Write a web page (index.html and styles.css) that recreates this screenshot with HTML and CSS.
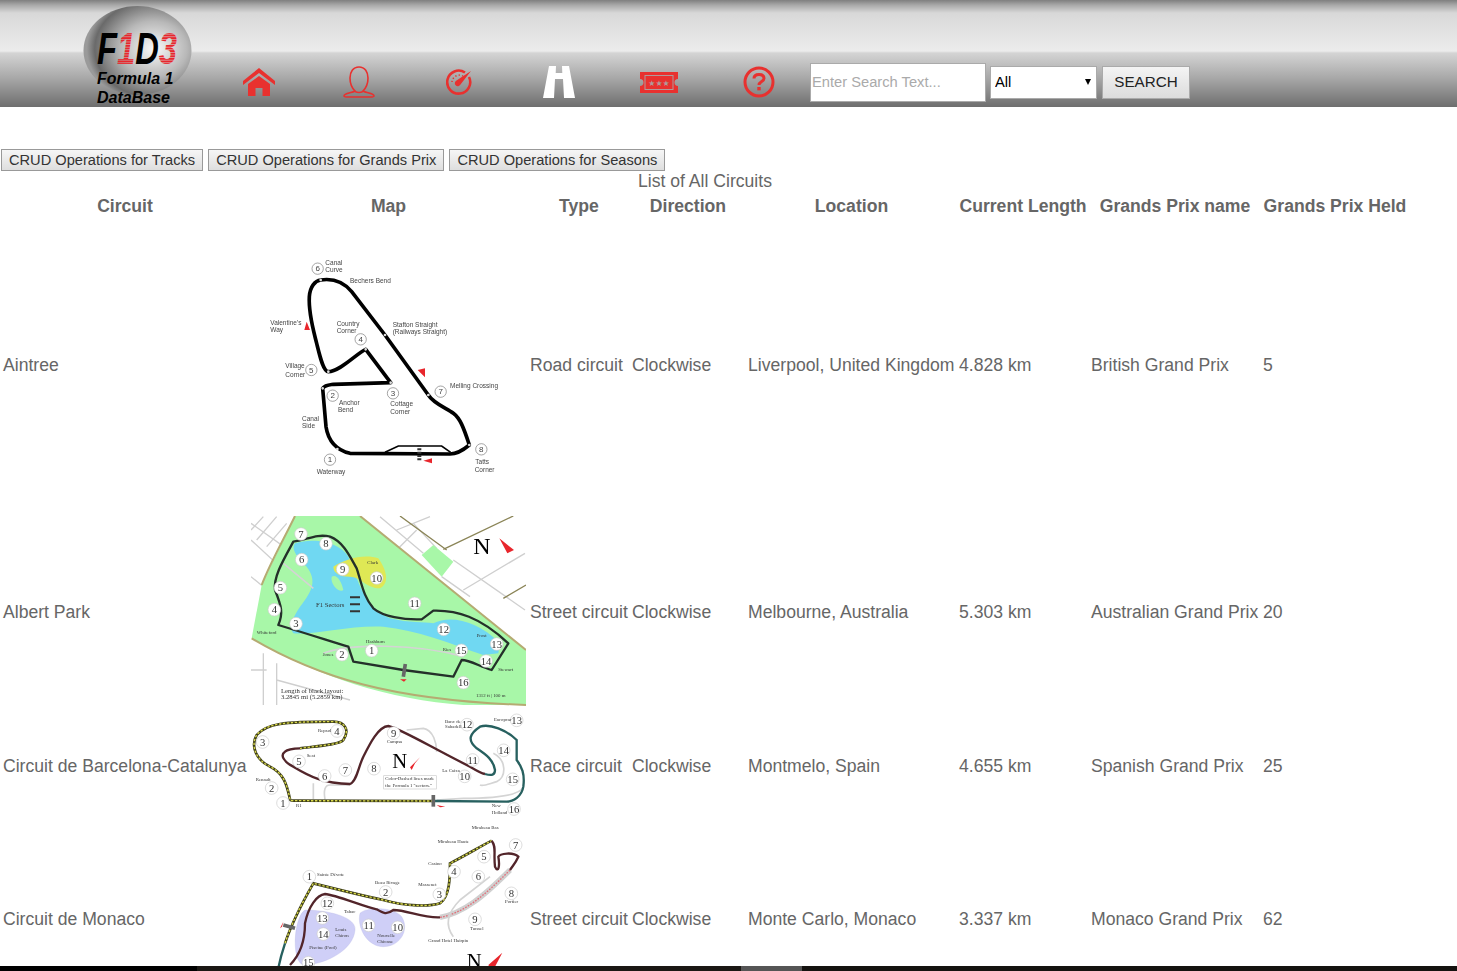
FILE: index.html
```html
<!DOCTYPE html>
<html lang="en">
<head>
    <meta charset="UTF-8">
    <meta name="viewport" content="width=device-width, initial-scale=1.0">
    <title>Formula 1 DataBase</title>
    <link rel="stylesheet" href="styles.css">
</head>
<body>
<div class="page">
    <header class="topbar">
        <svg class="logo" viewBox="0 0 109 101" width="109" height="101">
            <defs>
                <radialGradient id="disc" cx="65%" cy="48%" r="62%">
                    <stop offset="0" stop-color="#fafafa"/>
                    <stop offset="0.5" stop-color="#b8b8b8"/>
                    <stop offset="0.88" stop-color="#6a6a6a"/>
                    <stop offset="1" stop-color="#9a9a9a"/>
                </radialGradient>
                <pattern id="stripes" width="3" height="2.600" patternUnits="userSpaceOnUse">
                    <rect width="3" height="2" fill="#e8262c"/>
                </pattern>
            </defs>
            <ellipse cx="54.500" cy="44.500" rx="54" ry="44.500" fill="url(#disc)"/>
            <text class="logo-mark" x="14" y="58" textLength="80" lengthAdjust="spacingAndGlyphs"><tspan fill="#000">F</tspan><tspan fill="url(#stripes)">1</tspan><tspan fill="#000">D</tspan><tspan fill="url(#stripes)">3</tspan></text>
            <text class="logo-name" x="14" y="78">Formula 1</text>
            <text class="logo-name" x="14" y="97">DataBase</text>
        </svg>

        <nav class="nav">
            <a class="nav-item" href="#">
                <svg viewBox="0 0 32 28" width="32" height="28">
                    <path fill="#e8312f" d="M16 0 L32 13 V17 L16 5 L0 17 V13 Z M5 16 L16 8 L27 16 V28 H19.500 V20 H12.500 V28 H5 Z"/>
                </svg>
            </a>
            <a class="nav-item" href="#">
                <svg viewBox="0 0 32 32" width="32" height="32">
                    <g fill="none" stroke="#e8312f" stroke-width="1.600">
                        <path d="M16 1 C10 1 7 6 7 12 C7 18 10 23 12 25 C9 27 1 27 1 30 C1 31 3 31 5 31 H27 C29 31 31 31 31 30 C31 27 23 27 20 25 C22 23 25 18 25 12 C25 6 22 1 16 1 Z"/>
                        <path d="M12 25.500 Q16 27.500 20 25.500"/>
                    </g>
                </svg>
            </a>
            <a class="nav-item" href="#">
                <svg viewBox="0 0 26 26" width="26" height="26">
                    <g fill="none" stroke="#e8312f">
                        <path stroke-width="2.600" d="M19 3.500 A11.500 11.500 0 1 0 23 8"/>
                        <path stroke-width="1.500" stroke-dasharray="1.200 2.200" d="M6 13 A7.500 7.500 0 0 1 17 7"/>
                    </g>
                    <path fill="#e8312f" d="M25 2 L14.500 15.500 A3 3 0 1 1 10.500 11.500 Z"/>
                </svg>
            </a>
            <a class="nav-item" href="#">
                <svg viewBox="0 0 32 32" width="32" height="32">
                    <path fill="#fff" d="M6 0 H13 L12.700 7 H19.300 L19 0 H26 L32 32 H21 L20 13 H12 L11 32 H0 Z"/>
                </svg>
            </a>
            <a class="nav-item" href="#">
                <svg viewBox="0 0 38 21" width="38" height="21">
                    <path fill="#e8312f" d="M0 0 H38 V7 A3 3 0 0 0 38 14 V21 H0 V14 A3 3 0 0 0 0 7 Z"/>
                    <rect x="5" y="3.500" width="28" height="14" fill="none" stroke="#b09a9a" stroke-width="1"/>
                    <text class="ticket-stars" x="19" y="14" text-anchor="middle">★★★</text>
                </svg>
            </a>
            <a class="nav-item" href="#">
                <svg viewBox="0 0 32 32" width="32" height="32">
                    <circle cx="16" cy="16" r="14" fill="none" stroke="#e8312f" stroke-width="3"/>
                    <path fill="none" stroke="#e8312f" stroke-width="3" d="M11 12.500 C11 9.500 13.500 8.500 16 8.500 C19 8.500 21 10 21 12.500 C21 15.500 16 15.500 16 19"/>
                    <rect x="14.300" y="21" width="3.400" height="3.400" fill="#e8312f"/>
                </svg>
            </a>
        </nav>

        <form class="search">
            <input class="search-text" type="text" placeholder="Enter Search Text...">
            <div class="select-wrap">
                <select class="search-type">
                    <option>All</option>
                    <option>Tracks</option>
                    <option>Grands Prix</option>
                    <option>Seasons</option>
                </select>
            </div>
            <button class="search-btn" type="submit">SEARCH</button>
        </form>
    </header>

    <main class="content">
        <div class="crud">
            <button class="crud-btn">CRUD Operations for Tracks</button>
            <button class="crud-btn">CRUD Operations for Grands Prix</button>
            <button class="crud-btn">CRUD Operations for Seasons</button>
        </div>

        <table class="circuits">
            <caption>List of All Circuits</caption>
            <colgroup>
                <col class="col-circuit">
                <col class="col-map">
                <col class="col-type">
                <col class="col-direction">
                <col class="col-location">
                <col class="col-length">
                <col class="col-gp">
                <col class="col-held">
            </colgroup>
            <thead>
                <tr>
                    <th>Circuit</th>
                    <th>Map</th>
                    <th>Type</th>
                    <th>Direction</th>
                    <th>Location</th>
                    <th>Current Length</th>
                    <th>Grands Prix name</th>
                    <th>Grands Prix Held</th>
                </tr>
            </thead>
            <tbody>
                <tr>
                    <td>Aintree</td>
                    <td>
                        <svg class="map" viewBox="3 -96 825 882" width="275" height="294">
                            <path class="track-black" d="M212 90 C245 85 280 95 305 125 L405 255 L535 435 C550 460 590 475 610 490 C630 505 640 530 658 585 C640 600 620 612 600 612 L300 610 C260 600 235 575 228 530 L218 415 C225 405 235 405 250 403 L422 398 L347 298 C320 310 270 365 235 365 C220 365 210 320 200 280 C190 240 175 190 178 140 C180 110 195 92 212 90 Z"/>
                            <path class="track-thin" d="M405 607 L445 588 H575 L602 607"/>
                            <path class="ticks" d="M212 90 h.1 M405 255 h.1 M535 435 h.1 M658 585 h.1 M262 597 h.1 M218 415 h.1 M422 398 h.1 M347 298 h.1 M235 365 h.1"/>
                            <path class="flag" d="M163 240 L170 215 L180 240 Z M503 360 L525 355 L525 382 Z M520 632 L546 625 V640 Z"/>
                            <path class="checker" d="M508 585 V632"/>
                            <g class="turn">
                                <circle cx="203" cy="56" r="17"/><text x="203" y="62">6</text>
                                <circle cx="332" cy="268" r="17"/><text x="332" y="274">4</text>
                                <circle cx="184" cy="360" r="17"/><text x="184" y="366">5</text>
                                <circle cx="248" cy="437" r="17"/><text x="248" y="443">2</text>
                                <circle cx="429" cy="430" r="17"/><text x="429" y="436">3</text>
                                <circle cx="572" cy="425" r="17"/><text x="572" y="431">7</text>
                                <circle cx="694" cy="598" r="17"/><text x="694" y="604">8</text>
                                <circle cx="240" cy="629" r="17"/><text x="240" y="635">1</text>
                            </g>
                            <g class="label">
                                <text x="226" y="44">Canal</text>
                                <text x="226" y="66">Curve</text>
                                <text x="300" y="98">Bechers Bend</text>
                                <text x="61" y="224">Valentine's</text>
                                <text x="61" y="246">Way</text>
                                <text x="260" y="227">Country</text>
                                <text x="260" y="250">Corner</text>
                                <text x="428" y="231">Stafton Straight</text>
                                <text x="428" y="253">(Railways Straight)</text>
                                <text x="106" y="354">Village</text>
                                <text x="106" y="381">Corner</text>
                                <text x="600" y="414">Melling Crossing</text>
                                <text x="267" y="465">Anchor</text>
                                <text x="264" y="487">Bend</text>
                                <text x="421" y="469">Cottage</text>
                                <text x="421" y="491">Corner</text>
                                <text x="156" y="513">Canal</text>
                                <text x="156" y="535">Side</text>
                                <text x="200" y="671">Waterway</text>
                                <text x="676" y="641">Tatts</text>
                                <text x="674" y="667">Corner</text>
                            </g>
                        </svg>
                    </td>
                    <td>Road circuit</td>
                    <td>Clockwise</td>
                    <td>Liverpool, United Kingdom</td>
                    <td>4.828 km</td>
                    <td>British Grand Prix</td>
                    <td>5</td>
                </tr>
                <tr>
                    <td>Albert Park</td>
                    <td>
                        <svg class="map" viewBox="3 18 825 576" width="275" height="192">
                            <path class="road" d="M3 40 L130 130 M3 90 L90 170 M40 20 L3 60 M80 20 L20 90 M110 40 L50 110 M3 200 L40 230 M390 20 L520 130 M440 60 L540 20 M490 40 L560 115 M500 60 L440 120 M610 150 L825 300 M575 200 L660 260 M640 240 L825 130 M40 430 V585 M80 460 V585 M3 480 H50 M80 510 L300 570"/>
                            <path class="park" d="M135 18 L330 18 L828 420 V585 H640 C420 570 200 500 5 385 L35 225 Z"/>
                            <path class="park" d="M515 135 L550 105 L610 155 L575 200 Z"/>
                            <path class="edge" d="M330 18 L828 420 M5 385 C200 500 420 570 828 585 M135 18 C100 90 60 160 35 225"/>
                            <path class="main-road" d="M450 18 L590 120 M580 118 L790 18 M760 265 L828 225"/>
                            <path class="lake" d="M135 100 C200 80 280 100 300 150 C320 200 340 290 420 325 C480 340 520 335 550 340 C600 315 680 330 750 400 L745 430 L700 435 C600 400 500 360 400 350 C300 345 200 375 130 370 C115 350 130 320 150 290 C190 240 200 210 170 170 C150 150 120 120 135 100 Z"/>
                            <path class="isle" d="M245 200 C260 190 275 215 280 240 C270 250 240 225 245 200 Z"/>
                            <path class="club" d="M250 170 C280 150 340 130 385 145 C410 180 420 220 390 235 C350 235 330 200 300 200 C270 200 250 190 250 170 Z"/>
                            <path class="pale-road" d="M220 430 C300 400 500 400 640 440 M100 160 L190 235"/>
                            <path class="track-dark" d="M130 95 C170 90 200 70 240 80 C280 95 300 140 320 175 C335 220 340 260 370 295 C400 320 460 330 515 328 L550 302 C620 300 690 320 775 400 L725 480 C690 470 660 450 635 450 L610 500 L460 480 L310 455 L295 410 C260 400 200 380 85 345 C100 310 95 290 75 240 C70 200 100 150 130 95 Z"/>
                            <path class="sf" d="M466 462 L460 500"/>
                            <path class="flag" d="M450 508 H470 L462 515 Z M748 85 L792 120 L772 130 Z"/>
                            <g class="legend"><path d="M300 262 H330 M300 283 H330 M300 304 H330"/></g>
                            <g class="turn big">
                                <circle cx="153" cy="72" r="17"/><text x="153" y="81">7</text>
                                <circle cx="228" cy="101" r="17"/><text x="228" y="110">8</text>
                                <circle cx="155" cy="149" r="17"/><text x="155" y="158">6</text>
                                <circle cx="278" cy="178" r="17"/><text x="278" y="187">9</text>
                                <circle cx="380" cy="204" r="17"/><text x="380" y="213">10</text>
                                <circle cx="91" cy="233" r="17"/><text x="91" y="242">5</text>
                                <circle cx="73" cy="299" r="17"/><text x="73" y="308">4</text>
                                <circle cx="138" cy="341" r="17"/><text x="138" y="350">3</text>
                                <circle cx="494" cy="280" r="17"/><text x="494" y="289">11</text>
                                <circle cx="581" cy="358" r="17"/><text x="581" y="367">12</text>
                                <circle cx="740" cy="402" r="17"/><text x="740" y="411">13</text>
                                <circle cx="708" cy="453" r="17"/><text x="708" y="462">14</text>
                                <circle cx="634" cy="421" r="17"/><text x="634" y="430">15</text>
                                <circle cx="640" cy="518" r="17"/><text x="640" y="527">16</text>
                                <circle cx="365" cy="422" r="17"/><text x="365" y="431">1</text>
                                <circle cx="276" cy="434" r="17"/><text x="276" y="443">2</text>
                            </g>
                            <text class="north north-large" x="670" y="132">N</text>
                            <g class="label serif">
                                <text x="352" y="163">Clark</text>
                                <text class="wide" x="198" y="292">F1 Sectors</text>
                                <text x="20" y="372">Whiteford</text>
                                <text x="218" y="438">Jones</text>
                                <text x="348" y="398">Hashburn</text>
                                <text x="578" y="423">Ries</text>
                                <text x="680" y="380">Prost</text>
                                <text x="745" y="482">Stewart</text>
                                <text class="wide" x="93" y="548">Length of black layout:</text>
                                <text class="wide" x="93" y="568">3.2845 mi (5.2859 km)</text>
                                <text x="678" y="560">1312 ft | 100 m</text>
                            </g>
                        </svg>
                    </td>
                    <td>Street circuit</td>
                    <td>Clockwise</td>
                    <td>Melbourne, Australia</td>
                    <td>5.303 km</td>
                    <td>Australian Grand Prix</td>
                    <td>20</td>
                </tr>
                <tr>
                    <td>Circuit de Barcelona-Catalunya</td>
                    <td>
                        <svg class="map" viewBox="3 6 825 324" width="275" height="108">
                            <path class="pale-road" d="M190 220 V268 M225 268 C220 240 225 225 240 225 H300 M470 60 L520 55 C550 60 560 100 560 125 M730 130 C770 150 770 200 740 215 C720 220 700 230 690 225 M820 230 C810 260 720 265 640 265 L560 270"/>
                            <path class="track-olive" d="M120 268 C110 220 100 190 60 170 C20 150 0 110 20 75 C50 40 100 35 250 35 C285 35 300 60 280 90 C270 105 180 110 150 115"/>
                            <path class="track-dash" d="M120 268 C110 220 100 190 60 170 C20 150 0 110 20 75 C50 40 100 35 250 35 C285 35 300 60 280 90 C270 105 180 110 150 115"/>
                            <path class="track-red" d="M150 115 C130 115 110 120 105 125 C90 135 100 155 130 170 C180 200 220 220 300 222 C320 215 325 170 340 140 C360 100 385 50 415 48 C450 55 540 110 660 170 C680 182 695 190 705 192"/>
                            <path class="track-teal" d="M705 192 C725 198 735 195 735 180 C730 150 710 135 680 115 C650 90 660 70 690 50 C720 40 770 60 800 90 L800 150 C815 170 825 190 820 230 C815 260 790 275 770 275 L550 273"/>
                            <path class="track-olive" d="M550 273 L130 272 C122 272 120 270 120 268"/>
                            <path class="track-dash" d="M550 273 L130 272 C122 272 120 270 120 268"/>
                            <path class="sf" d="M550 255 V290"/>
                            <path class="flag" d="M480 172 L510 142 L495 160 L485 180 Z M560 285 L586 290 L570 292 Z"/>
                            <rect class="note" x="401" y="197" width="158" height="40"/>
                            <g class="turn big">
                                <circle cx="38" cy="96" r="17"/><text x="38" y="105">3</text>
                                <circle cx="261" cy="63" r="17"/><text x="261" y="72">4</text>
                                <circle cx="147" cy="154" r="17"/><text x="147" y="163">5</text>
                                <circle cx="224" cy="198" r="17"/><text x="224" y="207">6</text>
                                <circle cx="286" cy="180" r="17"/><text x="286" y="189">7</text>
                                <circle cx="372" cy="176" r="17"/><text x="372" y="185">8</text>
                                <circle cx="431" cy="69" r="17"/><text x="431" y="78">9</text>
                                <circle cx="644" cy="199" r="17"/><text x="644" y="208">10</text>
                                <circle cx="668" cy="150" r="17"/><text x="668" y="159">11</text>
                                <circle cx="651" cy="44" r="17"/><text x="651" y="53">12</text>
                                <circle cx="800" cy="31" r="17"/><text x="800" y="40">13</text>
                                <circle cx="761" cy="121" r="17"/><text x="761" y="130">14</text>
                                <circle cx="788" cy="208" r="17"/><text x="788" y="217">15</text>
                                <circle cx="792" cy="297" r="17"/><text x="792" y="306">16</text>
                                <circle cx="99" cy="279" r="17"/><text x="99" y="288">1</text>
                                <circle cx="65" cy="234" r="17"/><text x="65" y="243">2</text>
                            </g>
                            <text class="north" x="427" y="174">N</text>
                            <g class="label serif">
                                <text x="204" y="66">Repsol</text>
                                <text x="170" y="142">Seat</text>
                                <text x="17" y="212">Renault</text>
                                <text x="410" y="98">Campsa</text>
                                <text x="406" y="210">Color-Dashed lines mark</text>
                                <text x="406" y="230">the Formula 1 "sectors."</text>
                                <text x="585" y="40">Banc de</text>
                                <text x="585" y="55">Sabadell</text>
                                <text x="577" y="186">La Caixa</text>
                                <text x="732" y="34">Europcar</text>
                                <text x="725" y="292">New</text>
                                <text x="725" y="312">Holland</text>
                                <text x="138" y="290">R1</text>
                            </g>
                        </svg>
                    </td>
                    <td>Race circuit</td>
                    <td>Clockwise</td>
                    <td>Montmelo, Spain</td>
                    <td>4.655 km</td>
                    <td>Spanish Grand Prix</td>
                    <td>25</td>
                </tr>
                <tr>
                    <td>Circuit de Monaco</td>
                    <td>
                        <svg class="map" viewBox="3 342 825 570" width="275" height="190">
                            <path class="blob" d="M165 600 C230 600 320 620 315 660 C310 720 230 760 170 765 C120 775 130 620 165 600 Z M330 610 C350 590 430 590 455 620 C480 660 450 710 400 710 C350 710 320 650 330 610 Z"/>
                            <path class="tunnel" d="M780 480 C700 560 640 610 570 622"/>
                            <path class="tunnel-core" d="M780 480 C700 560 640 610 570 622"/>
                            <path class="pale-road" d="M610 680 C580 640 600 600 630 570 L720 500"/>
                            <path class="track-olive" d="M105 700 C125 640 150 590 190 520 C250 535 330 555 400 570 C470 590 540 590 570 580 C600 560 600 500 600 460 C640 440 690 410 725 392"/>
                            <path class="track-dash" d="M105 700 C125 640 150 590 190 520 C250 535 330 555 400 570 C470 590 540 590 570 580 C600 560 600 500 600 460 C640 440 690 410 725 392"/>
                            <path class="track-red" d="M725 392 C740 410 730 430 735 470 C745 490 750 470 745 440 C750 430 790 425 805 440 C795 462 790 465 780 480"/>
                            <path class="track-red" d="M570 622 C520 625 470 600 430 600 C410 615 400 610 380 598 C340 590 260 555 225 552 C200 555 175 590 165 640 C165 680 155 730 120 765"/>
                            <path class="track-teal" d="M105 700 C95 730 85 770 80 800"/>
                            <path class="sf" d="M100 645 L135 655"/>
                            <path class="flag" d="M90 655 L100 635 L96 650 Z M715 765 L757 728 L735 770 L728 790 Z"/>
                            <g class="turn big">
                                <circle cx="178" cy="500" r="15"/><text x="178" y="509">1</text>
                                <circle cx="407" cy="546" r="17"/><text x="407" y="555">2</text>
                                <circle cx="568" cy="553" r="17"/><text x="568" y="562">3</text>
                                <circle cx="612" cy="485" r="17"/><text x="612" y="494">4</text>
                                <circle cx="702" cy="440" r="17"/><text x="702" y="449">5</text>
                                <circle cx="685" cy="500" r="17"/><text x="685" y="509">6</text>
                                <circle cx="797" cy="405" r="17"/><text x="797" y="414">7</text>
                                <circle cx="784" cy="550" r="17"/><text x="784" y="559">8</text>
                                <circle cx="675" cy="628" r="17"/><text x="675" y="637">9</text>
                                <circle cx="443" cy="652" r="17"/><text x="443" y="661">10</text>
                                <circle cx="356" cy="646" r="17"/><text x="356" y="655">11</text>
                                <circle cx="232" cy="580" r="17"/><text x="232" y="589">12</text>
                                <circle cx="217" cy="624" r="17"/><text x="217" y="633">13</text>
                                <circle cx="220" cy="672" r="17"/><text x="220" y="681">14</text>
                                <circle cx="175" cy="758" r="17"/><text x="175" y="767">15</text>
                            </g>
                            <text class="north" x="650" y="775">N</text>
                            <g class="label serif">
                                <text x="201" y="499">Sainte Dévote</text>
                                <text x="375" y="521">Beau Rivage</text>
                                <text x="505" y="528">Massenet</text>
                                <text x="535" y="465">Casino</text>
                                <text x="563" y="399">Mirabeau Haute</text>
                                <text x="665" y="358">Mirabeau Bas</text>
                                <text x="765" y="580">Portier</text>
                                <text x="660" y="659">Tunnel</text>
                                <text x="535" y="696">Grand Hotel Hairpin</text>
                                <text x="282" y="609">Tabac</text>
                                <text x="256" y="662">Louis</text>
                                <text x="256" y="682">Chiron</text>
                                <text x="178" y="718">Piscine (Pool)</text>
                                <text x="382" y="680">Nouvelle</text>
                                <text x="382" y="700">Chicane</text>
                            </g>
                        </svg>
                    </td>
                    <td>Street circuit</td>
                    <td>Clockwise</td>
                    <td>Monte Carlo, Monaco</td>
                    <td>3.337 km</td>
                    <td>Monaco Grand Prix</td>
                    <td>62</td>
                </tr>
            </tbody>
        </table>
    </main>

    <footer class="bottombar">
        <span class="bar-black"></span>
        <span class="bar-dark"></span>
        <span class="bar-light"></span>
        <span class="bar-rest"></span>
    </footer>
</div>
</body>
</html>
```

FILE: styles.css
```css
body {
    font-family: "Liberation Sans", Arial, sans-serif;
    margin: 0;
    color: #666;
    background-color: #fff;
}
.page {
    display: flex;
    flex-direction: column;
    height: 100vh;
    overflow: hidden;
}

/* top bar */
.topbar {
    flex: none;
    display: flex;
    align-items: flex-end;
    height: 107px;
    padding-left: 83px;
    box-sizing: border-box;
    background: linear-gradient(to bottom, #7f7f7f 0, #a8a8a8 5px, #d8d8d8 13px, #dcdcdc 20px, #ececec 51px, #d4d4d4 53px, #a8a8a8 78px, #6e6e6e 107px);
}
.logo {
    flex: none;
    display: block;
}
.logo-mark {
    font: italic bold 44px "Liberation Sans", Arial, sans-serif;
}
.logo-name {
    font: italic bold 16px "Liberation Sans", Arial, sans-serif;
    fill: #000;
}
.nav {
    display: flex;
    margin-left: 17px;
    padding-bottom: 9px;
}
.nav-item {
    display: flex;
    align-items: center;
    justify-content: center;
    width: 100px;
    height: 32px;
}
.ticket-stars {
    font: 8px "DejaVu Sans", sans-serif;
    fill: #b09a9a;
}
.search {
    display: flex;
    align-items: center;
    gap: 5px;
    margin-left: 1px;
    padding-bottom: 5px;
}
.search-text {
    width: 176px;
    height: 39px;
    box-sizing: border-box;
    margin-right: -1px;
    padding: 0 1px 2px;
    border: 1px solid #aaa;
    font: 14.7px "Liberation Sans", Arial, sans-serif;
    color: #333;
}
.search-text::placeholder {
    color: #aaa;
}
.select-wrap {
    position: relative;
    display: flex;
}
.select-wrap::after {
    content: "";
    position: absolute;
    top: 13px;
    right: 6px;
    border-top: 6px solid #000;
    border-left: 3px solid transparent;
    border-right: 3px solid transparent;
    pointer-events: none;
}
.search-type {
    width: 107px;
    height: 33px;
    box-sizing: border-box;
    padding: 0 0 2px 4px;
    border: 1px solid #aaa;
    border-radius: 0;
    background-color: #fff;
    appearance: none;
    font: 14.7px "Liberation Sans", Arial, sans-serif;
    color: #000;
}
.search-btn {
    width: 88px;
    height: 33px;
    padding: 0 0 2px;
    border: 1px solid #aaa;
    background: linear-gradient(to bottom, #f4f4f4, #dcdcdc);
    font: 15.2px "Liberation Sans", Arial, sans-serif;
    color: #222;
}

/* content */
.content {
    flex: 1;
    min-height: 0;
    overflow: hidden;
    padding-top: 42px;
}
.crud {
    display: flex;
    gap: 5px;
    padding-left: 1px;
}
.crud-btn {
    height: 22px;
    padding: 0 7px;
    border: 1px solid #999;
    background: linear-gradient(to bottom, #f6f6f6, #dedede);
    font: 14.63px "Liberation Sans", Arial, sans-serif;
    color: #333;
}
.circuits {
    table-layout: fixed;
    width: 1410px;
    font-size: 17.6px;
    color: #666;
}
.circuits caption {
    line-height: 21px;
    padding-bottom: 3px;
}
.col-circuit { width: 246px; }
.col-map { width: 277px; }
.col-type { width: 100px; }
.col-direction { width: 114px; }
.col-location { width: 209px; }
.col-length { width: 130px; }
.col-gp { width: 170px; }
.col-held { width: 146px; }
.circuits th,
.circuits td {
    white-space: nowrap;
}
.circuits th {
    line-height: 16px;
}

/* circuit maps */
.map {
    display: block;
    filter: blur(0.45px);
}
.map path {
    fill: none;
}
.map .track-black {
    stroke: #000;
    stroke-width: 11;
    stroke-linejoin: round;
}
.map .track-thin {
    stroke: #000;
    stroke-width: 5;
}
.map .ticks {
    stroke: #ddd;
    stroke-width: 8;
    stroke-linecap: round;
}
.map .checker {
    stroke: #333;
    stroke-width: 12;
    stroke-dasharray: 6 4;
}
.map .flag {
    fill: #e8262c;
}
.map .road {
    stroke: #cfcfcf;
    stroke-width: 4;
}
.map .main-road {
    stroke: #8a8456;
    stroke-width: 4;
}
.map .park {
    fill: #a8f7a8;
}
.map .edge {
    stroke: #b5ab72;
    stroke-width: 6;
}
.map .lake {
    fill: #70d8f2;
}
.map .isle {
    fill: #a8f7a8;
}
.map .club {
    fill: #dfe855;
}
.map .pale-road {
    stroke: #d4d4d4;
    stroke-width: 5;
}
.map .track-dark {
    stroke: #24302a;
    stroke-width: 7;
    stroke-linejoin: round;
}
.map .sf {
    stroke: #666;
    stroke-width: 11;
}
.map .legend path {
    stroke: #333;
    stroke-width: 6;
}
.map .track-olive {
    stroke: #3e3e18;
    stroke-width: 8;
}
.map .track-dash {
    stroke: #d8d84a;
    stroke-width: 4;
    stroke-dasharray: 7 5;
}
.map .track-red {
    stroke: #52252a;
    stroke-width: 7;
}
.map .track-teal {
    stroke: #27605f;
    stroke-width: 7;
}
.map .blob {
    fill: #cfcff7;
    stroke: #b8b8e8;
    stroke-width: 1;
}
.map .tunnel {
    stroke: #d0d0d0;
    stroke-width: 16;
}
.map .tunnel-core {
    stroke: #e2707a;
    stroke-width: 4;
    stroke-dasharray: 5 4;
}
.map .note {
    fill: #fff;
    stroke: #ccc;
    stroke-width: 2;
}
.turn circle {
    fill: #fff;
    stroke: #777;
    stroke-width: 2;
}
.turn text {
    font: 24px "Liberation Sans", Arial, sans-serif;
    text-anchor: middle;
    fill: #444;
    transform: translateY(2px);
}
.turn.big text {
    font: 32px "Liberation Serif", serif;
    fill: #333;
}
.turn.big circle {
    r: 19px;
    stroke: #ccc;
}
.label text {
    font: 19.5px "Liberation Sans", Arial, sans-serif;
    fill: #444;
}
.label.serif text {
    font: 14.5px "Liberation Serif", serif;
    fill: #333;
}
.label.serif text.wide {
    font-size: 20px;
}
.north {
    font: 62px "Liberation Serif", serif;
    fill: #000;
}
.north-large {
    font-size: 72px;
}

/* strip at the bottom of the window */
.bottombar {
    flex: none;
    display: flex;
    height: 5px;
}
.bar-black { width: 197px; background-color: #000; }
.bar-dark { width: 544px; background-color: #1b1814; }
.bar-light { width: 61px; background-color: #555; }
.bar-rest { flex: 1; background-color: #151310; }
```
